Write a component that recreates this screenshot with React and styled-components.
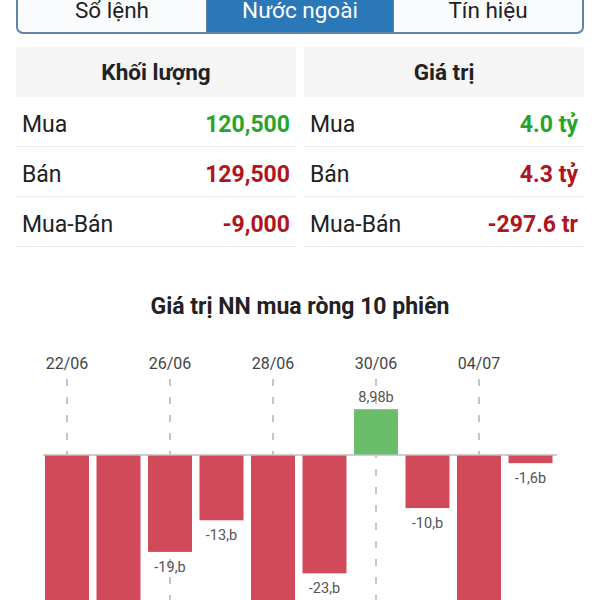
import React from 'react'
import styled, { createGlobalStyle } from 'styled-components'

const GlobalStyle = createGlobalStyle`
  html, body {
    margin: 0;
    padding: 0;
    background: #fff;
    font-family: Roboto, "Noto Sans", sans-serif;
    overflow: hidden;
  }
`

const Page = styled.div`
  width: 600px;
  height: 600px;
  overflow: hidden;
`

const Tabs = styled.div`
  margin: -14px 16px 0;
  height: 44px;
  display: flex;
  border: 2px solid #5e84a6;
  border-radius: 7px;
  overflow: hidden;
  background: #f9fbfc;
`

const Tab = styled.div`
  flex: ${p => (p.$active ? '0 0 186px' : '1')};
  display: flex;
  align-items: center;
  justify-content: center;
  font-size: 22.5px;
  color: ${p => (p.$active ? '#ffffff' : '#222')};
  background: ${p => (p.$active ? '#2a78b8' : 'transparent')};
  border-left: ${p => (p.$active ? '1px solid #5e84a6' : 'none')};
  border-right: ${p => (p.$active ? '1px solid #5e84a6' : 'none')};
`

const Tables = styled.div`
  display: grid;
  grid-template-columns: 1fr 1fr;
  gap: 8px;
  padding: 0 16px;
  margin-top: 13px;
`

const Table = styled.div`
  display: flex;
  flex-direction: column;
`

const Head = styled.div`
  height: 50px;
  background: #f5f5f5;
  display: flex;
  align-items: center;
  justify-content: center;
  font-size: 22.5px;
  font-weight: 700;
  color: #222;
`

const Row = styled.div`
  height: 50px;
  display: flex;
  align-items: center;
  justify-content: space-between;
  padding: 6px 6px 0;
  border-bottom: 1px solid #ececec;
  box-sizing: border-box;
  font-size: 23px;
`

const Label = styled.span`
  color: #222;
`

const Value = styled.span`
  font-weight: 700;
  color: ${p => (p.$up ? '#27a52b' : '#b0141c')};
`

const Title = styled.div`
  margin-top: 46px;
  text-align: center;
  font-size: 23px;
  font-weight: 700;
  color: #222;
`

const ChartBox = styled.div`
  margin-top: 12px;
  height: 300px;
`

const volumes = [
  { label: 'Mua', value: '120,500', up: true },
  { label: 'Bán', value: '129,500' },
  { label: 'Mua-Bán', value: '-9,000' },
]

const values = [
  { label: 'Mua', value: '4.0 tỷ', up: true },
  { label: 'Bán', value: '4.3 tỷ' },
  { label: 'Mua-Bán', value: '-297.6 tr' },
]

const bars = [
  { v: -40 },
  { v: -40 },
  { v: -19, text: '-19,b' },
  { v: -12.8, text: '-13,b' },
  { v: -40 },
  { v: -23.2, text: '-23,b' },
  { v: 8.98, text: '8,98b' },
  { v: -10.4, text: '-10,b' },
  { v: -40 },
  { v: -1.6, text: '-1,6b' },
]

const dates = ['22/06', '26/06', '28/06', '30/06', '04/07']

const Chart = () => {
  const base = 123
  const scale = 5.1
  const slot = 51.5
  const x0 = 45
  const bw = 44
  return (
    <svg width="600" height="300" viewBox="0 0 600 300">
      {dates.map((d, i) => {
        const cx = x0 + slot * (i * 2) + bw / 2
        return (
          <g key={d}>
            <text x={cx} y={37} textAnchor="middle" fontSize="16" fill="#444" fontFamily="Roboto, sans-serif">{d}</text>
            <line x1={cx} y1={47} x2={cx} y2={300} stroke="#8a8a8a" strokeWidth="1" strokeDasharray="7 11" />
          </g>
        )
      })}
      {bars.map((b, i) => {
        const x = x0 + slot * i
        const h = Math.abs(b.v) * scale
        const y = b.v > 0 ? base - h : base
        return (
          <g key={i}>
            <rect x={x} y={y} width={bw} height={h} fill={b.v > 0 ? '#6abd69' : '#d04a5a'} />
            {b.text && (
              <text
                x={x + bw / 2}
                y={b.v > 0 ? y - 7 : y + h + 20}
                textAnchor="middle"
                fontSize="14.5"
                fill="#555"
                fontFamily="Roboto, sans-serif"
              >
                {b.text}
              </text>
            )}
          </g>
        )
      })}
      <line x1={43} y1={base} x2={557} y2={base} stroke="#bdbdbd" strokeWidth="1.5" />
    </svg>
  )
}

const App = () => (
  <Page>
    <GlobalStyle />
    <Tabs>
      <Tab>Sổ lệnh</Tab>
      <Tab $active>Nước ngoài</Tab>
      <Tab>Tín hiệu</Tab>
    </Tabs>
    <Tables>
      <Table>
        <Head>Khối lượng</Head>
        {volumes.map(r => (
          <Row key={r.label}>
            <Label>{r.label}</Label>
            <Value $up={r.up}>{r.value}</Value>
          </Row>
        ))}
      </Table>
      <Table>
        <Head>Giá trị</Head>
        {values.map(r => (
          <Row key={r.label}>
            <Label>{r.label}</Label>
            <Value $up={r.up}>{r.value}</Value>
          </Row>
        ))}
      </Table>
    </Tables>
    <Title>Giá trị NN mua ròng 10 phiên</Title>
    <ChartBox>
      <Chart />
    </ChartBox>
  </Page>
)

export default App
